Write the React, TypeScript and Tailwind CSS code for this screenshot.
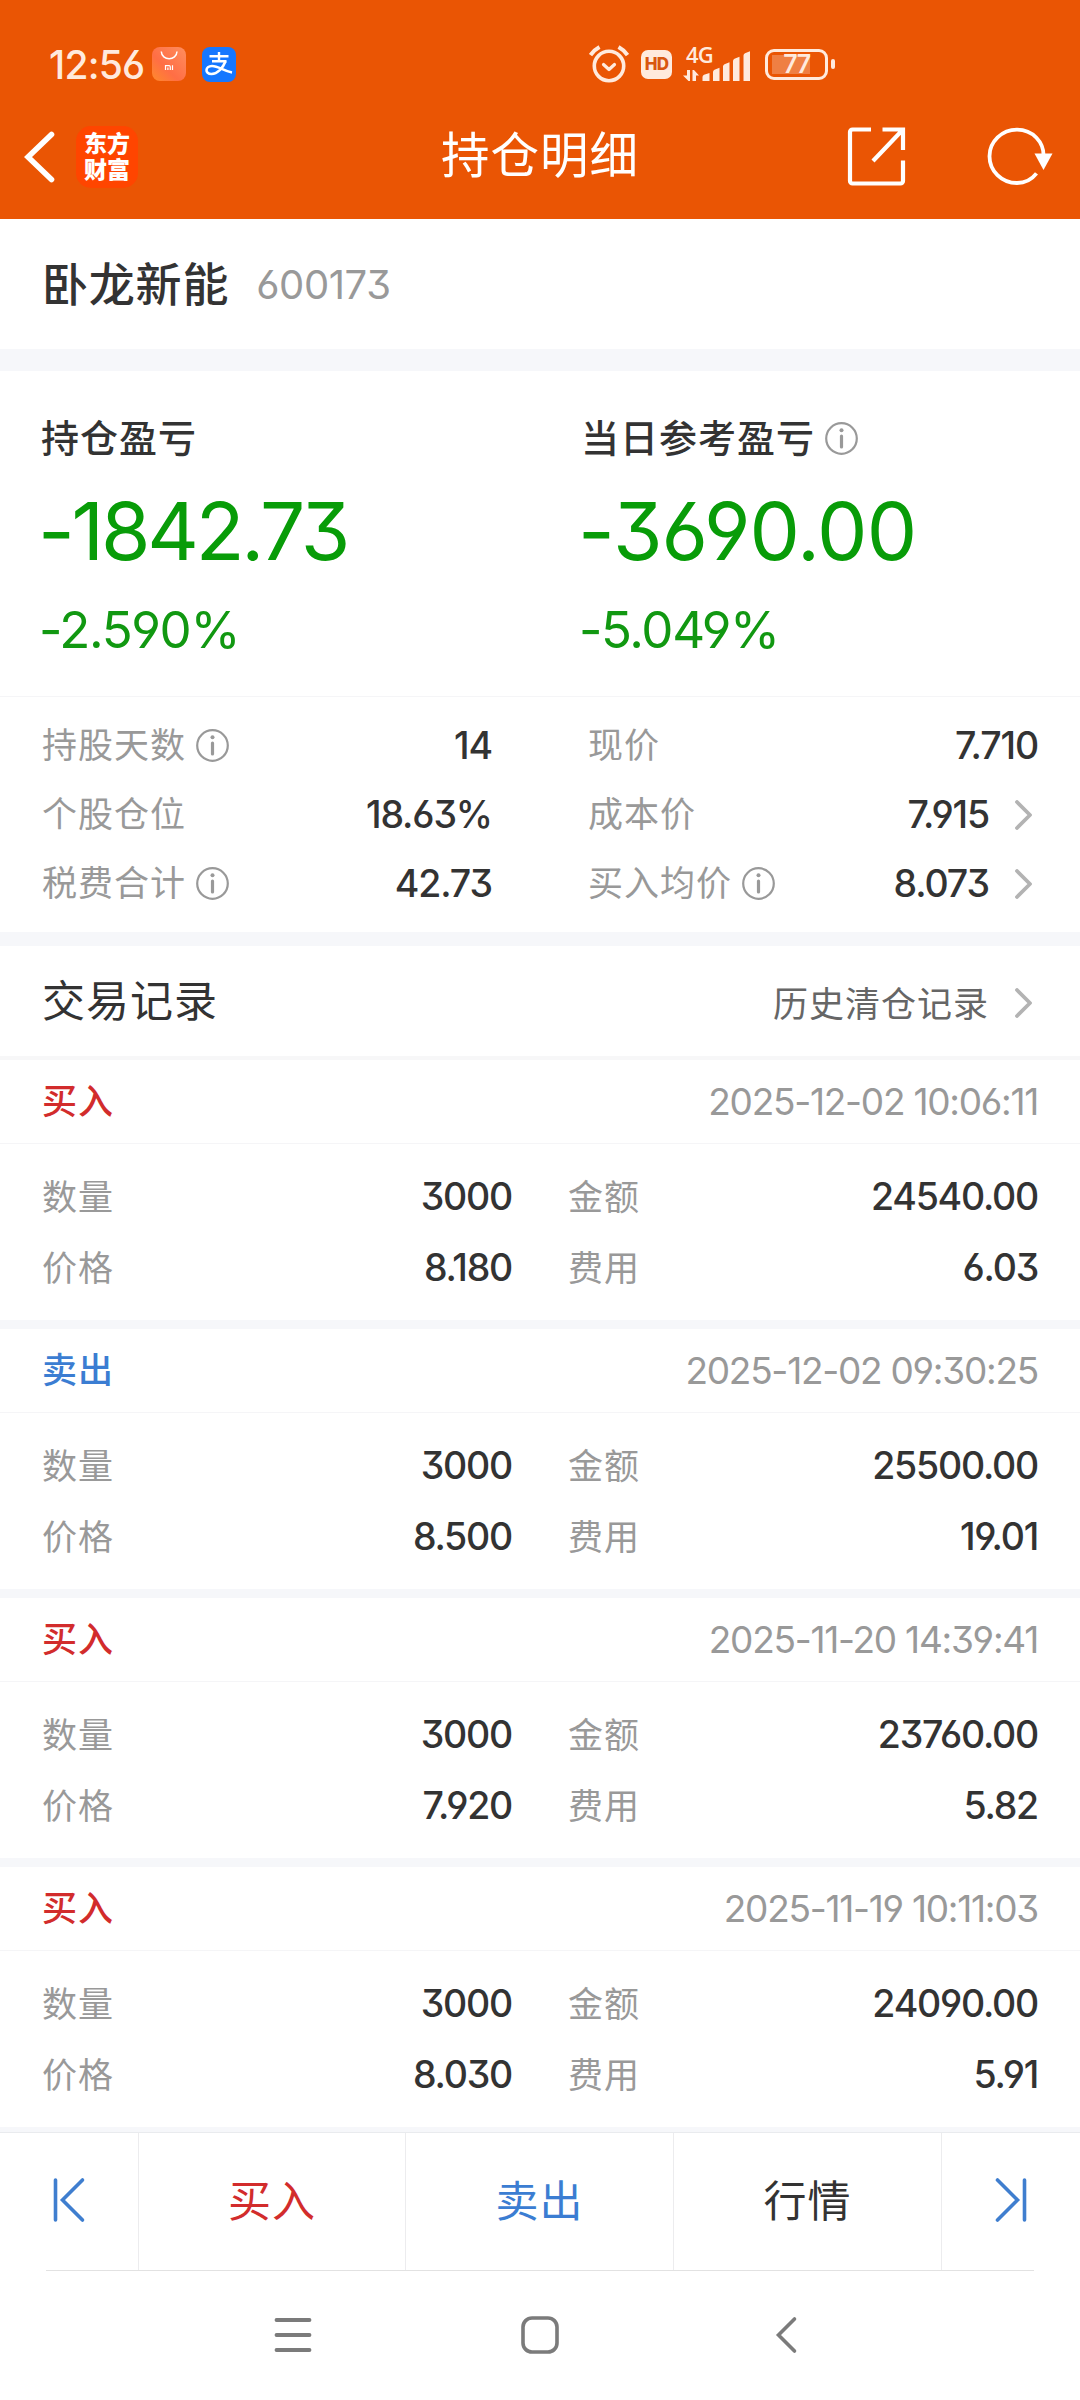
import { ReactNode } from "react";

// ─── DATA ─────────────────────────────────────────────────────────────────────

const leftStats = [
  { label: "持股天数", value: "14", info: true },
  { label: "个股仓位", value: "18.63%" },
  { label: "税费合计", value: "42.73", info: true },
];

const rightStats = [
  { label: "现价", value: "7.710" },
  { label: "成本价", value: "7.915", link: true },
  { label: "买入均价", value: "8.073", info: true, link: true },
];

const records = [
  { side: "buy", time: "2025-12-02 10:06:11", qty: "3000", amount: "24540.00", price: "8.180", fee: "6.03" },
  { side: "sell", time: "2025-12-02 09:30:25", qty: "3000", amount: "25500.00", price: "8.500", fee: "19.01" },
  { side: "buy", time: "2025-11-20 14:39:41", qty: "3000", amount: "23760.00", price: "7.920", fee: "5.82" },
  { side: "buy", time: "2025-11-19 10:11:03", qty: "3000", amount: "24090.00", price: "8.030", fee: "5.91" },
];

// ─── ICONS ────────────────────────────────────────────────────────────────────

function InfoIcon() {
  return (
    <svg className="ml-2.5 h-[33px] w-[33px] flex-shrink-0" viewBox="0 0 33 33" fill="none">
      <circle cx="16.5" cy="16.5" r="15.3" stroke="#999" strokeWidth="2.2" />
      <circle cx="16.5" cy="8.3" r="2" fill="#999" />
      <path d="M16.5 14v11" stroke="#999" strokeWidth="3.2" strokeLinecap="round" />
    </svg>
  );
}

function Chevron() {
  return (
    <svg className="ml-[26px] mr-[6px] h-[30px] w-[17px] flex-shrink-0" viewBox="0 0 17 30" fill="none">
      <path d="M2 2l13 13L2 28" stroke="#b3b3b3" strokeWidth="3.8" strokeLinecap="round" strokeLinejoin="round" />
    </svg>
  );
}

// ─── STATUS BAR ───────────────────────────────────────────────────────────────

function StatusBar() {
  return (
    <div className="flex h-[96px] items-center pl-[49px] pt-8 text-[#ffeadd]">
      <div className="w-[103px] whitespace-nowrap text-[39px] font-medium leading-none tracking-[-0.02em]">12:56</div>
      <svg className="h-[34px] w-[34px]" viewBox="0 0 34 34" fill="none">
        <defs>
          <linearGradient id="mi" x1="0" y1="1" x2="1" y2="0">
            <stop offset="0" stopColor="#ff8a2b" />
            <stop offset="0.4" stopColor="#ff6e45" />
            <stop offset="1" stopColor="#ff8e5e" />
          </linearGradient>
        </defs>
        <rect width="34" height="34" rx="8" fill="url(#mi)" />
        <path d="M9.3 4.5c.4 9.6 15.3 9.6 15.7 0" stroke="#fff" strokeWidth="1.5" />
        <path d="M13.5 23v-4.3h3.6c.8 0 1.2.4 1.2 1.2V23M15.9 20.5V23M20.5 18.2V23" stroke="#fff" strokeWidth="1.2" />
      </svg>
      <div className="ml-4 flex h-[35px] w-[34px] items-center justify-center rounded-[8px] bg-[#1677ff]">
        <svg className="h-[26px] w-[28px]" viewBox="0 0 28 26" fill="none" stroke="#fff">
          <path d="M14 1v9M4.5 5.2h19M7 10.3h14.5" strokeWidth="2.4" />
          <path d="M20.5 10.3C18 17 12.5 23 6.5 23c-7 0-6.5-8 .5-8 6.5 0 11.5 5 20 6.5" strokeWidth="2.6" />
        </svg>
      </div>

      <svg className="ml-[353px] h-[38px] w-[40px]" viewBox="0 0 40 38" fill="none" stroke="currentColor">
        <circle cx="20" cy="21" r="14.7" strokeWidth="3.6" />
        <path d="M14.5 19.5l5.5 5 5.5-5" strokeWidth="3.2" strokeLinecap="round" strokeLinejoin="round" />
        <path d="M1.5 10Q5 5 10.5 2M38.500 10Q35 5 29.5 2" strokeWidth="4" />
      </svg>
      <div className="ml-[12px] flex h-[29px] w-[31px] items-center justify-center rounded-[7px] bg-[#ffeadd] text-[17px] font-extrabold leading-none tracking-[-0.04em] text-[#d9570f]">
        HD
      </div>
      <div className="relative ml-[11px] h-[36px] w-[68px]">
        <span className="absolute left-[3px] top-[-3px] font-['Open_Sans'] text-[22px] font-semibold leading-none tracking-[-0.04em]">4G</span>
        <svg className="h-[36px] w-[68px]" viewBox="0 0 68 36" fill="currentColor">
          <path d="M4 24h3v11H5.5L0 29.500h4zM9.500 24H11l5 5.500h-3V35H9.500z" />
          <path d="M19.500 31q0-1.500 1.500-2.200L26.500 27v8h-7zM30 26q0-1.500 1.500-2.200l5-2V35H30zM40 20.500q0-1.500 1.500-2.200l5-2V35H40zM50 15q0-1.500 1.500-2.200l5-2V35H50zM60.500 9.500q0-1.500 1.500-2.200l5-2V35h-6.500z" />
        </svg>
      </div>
      <div className="relative ml-[14px] flex h-[31px] w-[63px] items-center rounded-[9px] border-[3px] border-current p-[4px]">
        <div className="h-[19px] w-[38px] bg-white/25" />
        <span className="absolute inset-0 flex items-center justify-center text-[25px] font-semibold leading-none tracking-[-0.06em]">77</span>
      </div>
      <div className="ml-[3px] h-[10px] w-[4px] rounded-[2px] bg-current" />
    </div>
  );
}

// ─── HEADER ───────────────────────────────────────────────────────────────────

function Header() {
  return (
    <header className="h-[219px] bg-[#ea5504]">
      <StatusBar />
      <div className="flex h-[121px] items-center pl-6 pr-[27px]">
        <svg className="h-[52px] w-[32px]" viewBox="0 0 32 52" fill="none">
          <path d="M27.5 3.5L4 26l23.5 22.5" stroke="#fff" strokeWidth="5.6" strokeLinecap="round" />
        </svg>
        <div className="ml-5 flex h-[62px] w-[62px] flex-col items-center justify-center rounded-[15px] bg-[#ff4500] text-[23px] font-black leading-[26px] text-white">
          <span>东方</span>
          <span>财富</span>
        </div>
        <h1 className="ml-[303px] w-[200px] whitespace-nowrap text-[48.5px] leading-none tracking-[1px] text-white">持仓明细</h1>
        <svg className="ml-[206px] h-[60px] w-[60px]" viewBox="0 0 60 60" fill="none" stroke="#fff" strokeWidth="4.2">
          <path d="M24 2.500H5.500a2.500 2.500 0 0 0-2.500 2.500v49a2.500 2.500 0 0 0 2.500 2.500H53.500a2.500 2.500 0 0 0 2.500-2.500V33.500" />
          <path d="M35.500 2.500H56v20.500M55.500 3L26 34" />
        </svg>
        <svg className="ml-auto h-[60px] w-[68px]" viewBox="0 0 68 60" fill="none">
          <path d="M58.5 30.500C59.500 15 47.500 2.700 32 2.700 17 2.700 4.500 14.500 4.500 29.200s12 26.800 27.500 26.800c8 0 15-3.800 19.500-9.600" stroke="#fff" strokeWidth="3.8" />
          <path d="M49.500 26.500h18L58.500 43z" fill="#fff" />
        </svg>
      </div>
    </header>
  );
}

// ─── PROFIT ───────────────────────────────────────────────────────────────────

type ProfitProps = { label: string; value: string; percent: string; info?: boolean; tracking: string };

function Profit({ label, value, percent, info, tracking }: ProfitProps) {
  return (
    <div className="w-1/2 pl-[41px] pt-[43px]">
      <div className="flex h-[48px] items-center text-[38px] font-medium tracking-[1px] text-[#333]">
        {label}
        {info && <InfoIcon />}
      </div>
      <div className={`-ml-[3px] mt-[29px] text-[80px] leading-[80px] text-[#089c08] ${tracking}`}>{value}</div>
      <div className="-ml-0.5 mt-[33px] text-[51px] leading-[52px] tracking-[-0.027em] text-[#119811]">{percent}</div>
    </div>
  );
}

type StatProps = { label: string; value: string; info?: boolean; link?: boolean };

function Stat({ label, value, info, link }: StatProps) {
  return (
    <div className="flex h-[69px] items-center">
      <span className="text-[35px] tracking-[1px] text-[#999]">{label}</span>
      {info && <InfoIcon />}
      <span className="ml-auto pt-0.5 text-[37.5px] font-medium tracking-[-0.03em] text-[#333]">{value}</span>
      {link && <Chevron />}
    </div>
  );
}

// ─── RECORDS ──────────────────────────────────────────────────────────────────

function Field({ label, value, className }: { label: string; value: string; className: string }) {
  return (
    <div className={`flex h-[71px] items-center justify-between ${className}`}>
      <span className="text-[35px] tracking-[1px] text-[#999]">{label}</span>
      <span className="text-[37.5px] font-medium tracking-[-0.033em] text-[#333]">{value}</span>
    </div>
  );
}

function RecordCard({ record }: { record: (typeof records)[number] }) {
  const buy = record.side === "buy";
  return (
    <article className="h-[269px] flex-shrink-0 border-b-[9px] border-[#f6f7fa]">
      <div className="flex h-[84px] items-center justify-between border-b border-[#f5f5f7] px-[42px]">
        <span className={`text-[35px] font-medium tracking-[1px] ${buy ? "text-[#d22c2c]" : "text-[#3b7dd2]"}`}>
          {buy ? "买入" : "卖出"}
        </span>
        <span className="text-[37px] tracking-[-0.034em] text-[#999]">{record.time}</span>
      </div>
      <div className="flex flex-wrap px-[42px] pt-[18px]">
        <Field label="数量" value={record.qty} className="w-[470px]" />
        <Field label="金额" value={record.amount} className="ml-[56px] w-[470px]" />
        <Field label="价格" value={record.price} className="w-[470px]" />
        <Field label="费用" value={record.fee} className="ml-[56px] w-[470px]" />
      </div>
    </article>
  );
}

// ─── BOTTOM BAR ───────────────────────────────────────────────────────────────

function Action({ className, children }: { className: string; children: ReactNode }) {
  return (
    <div className={`flex items-center justify-center text-[43px] leading-none tracking-[1px] ${className}`}>{children}</div>
  );
}

function BottomBar() {
  return (
    <footer className="h-[268px] bg-white">
      <div className="flex h-[138px] border-t border-[#e9ebee]">
        <Action className="w-[138px] pb-[3px]">
          <svg className="h-[46px] w-[34px]" viewBox="0 0 34 46" fill="none" stroke="#3f7ecf" strokeWidth="3.6" strokeLinecap="round">
            <path d="M3.5 3v40M30.5 3l-20 20 20 20" />
          </svg>
        </Action>
        <Action className="w-[267px] border-l border-[#ececee] text-[#d22c2c]">买入</Action>
        <Action className="w-[268px] border-l border-[#ececee] text-[#3b7dd2]">卖出</Action>
        <Action className="w-[268px] border-l border-[#ececee] text-[#333]">行情</Action>
        <Action className="w-[139px] border-l border-[#ececee] pb-[3px]">
          <svg className="h-[46px] w-[34px]" viewBox="0 0 34 46" fill="none" stroke="#3f7ecf" strokeWidth="3.6" strokeLinecap="round">
            <path d="M30.5 3v40M3.5 3l20 20-20 20" />
          </svg>
        </Action>
      </div>
      <div className="mx-[46px] h-px bg-[#e2e2e2]" />
      <nav className="flex h-[128px] items-center justify-center gap-[207px]">
        <svg className="h-[40px] w-[40px]" viewBox="0 0 40 40" fill="none" stroke="#7b7b7b" strokeWidth="3.8" strokeLinecap="round">
          <path d="M3.5 5h33M3.5 20h33M3.5 35h33" />
        </svg>
        <svg className="h-[40px] w-[40px]" viewBox="0 0 40 40" fill="none" stroke="#7b7b7b" strokeWidth="3.6">
          <rect x="3" y="3" width="34" height="34" rx="9" />
        </svg>
        <svg className="h-[40px] w-[40px]" viewBox="0 0 40 40" fill="none" stroke="#7b7b7b" strokeWidth="3.6" strokeLinecap="round">
          <path d="M27.5 4l-16 16 16 16" />
        </svg>
      </nav>
    </footer>
  );
}

// ─── PAGE ─────────────────────────────────────────────────────────────────────

export default function App() {
  return (
    <div
      lang="zh-CN"
      className="flex h-[2400px] w-[1080px] flex-col overflow-hidden bg-white font-[Inter,'Noto_Sans_CJK_SC',sans-serif] [font-feature-settings:'cv03','cv04','cv09']"
    >
      <Header />
      <section className="flex h-[130px] items-center px-[42px]">
        <span className="text-[46px] font-medium tracking-[0.8px] text-[#333]">卧龙新能</span>
        <span className="ml-[27px] pt-0.5 text-[40px] tracking-[-0.01em] text-[#999]">600173</span>
      </section>
      <div className="h-[22px] bg-[#f6f7fa]" />
      <section className="flex h-[326px] border-b border-[#f5f5f7]">
        <Profit label="持仓盈亏" value="-1842.73" percent="-2.590%" tracking="tracking-[-0.04em]" />
        <Profit label="当日参考盈亏" value="-3690.00" percent="-5.049%" tracking="tracking-[-0.012em]" info />
      </section>
      <section className="flex h-[235px] px-[42px] pt-[14px]">
        <div className="w-[450px]">
          {leftStats.map((s) => (
            <Stat key={s.label} {...s} />
          ))}
        </div>
        <div className="ml-[96px] w-[450px]">
          {rightStats.map((s) => (
            <Stat key={s.label} {...s} />
          ))}
        </div>
      </section>
      <div className="h-[14px] bg-[#f6f7fa]" />
      <section className="flex h-[114px] items-center border-b-4 border-[#f7f7f8] px-[42px]">
        <h2 className="text-[43px] tracking-[1px] text-[#333]">交易记录</h2>
        <span className="ml-auto pt-1.5 text-[35px] tracking-[1px] text-[#666]">历史清仓记录</span>
        <div className="pt-1">
          <Chevron />
        </div>
      </section>
      <main className="flex h-[1072px] flex-col overflow-hidden">
        {records.map((r) => (
          <RecordCard key={r.time} record={r} />
        ))}
      </main>
      <BottomBar />
    </div>
  );
}
